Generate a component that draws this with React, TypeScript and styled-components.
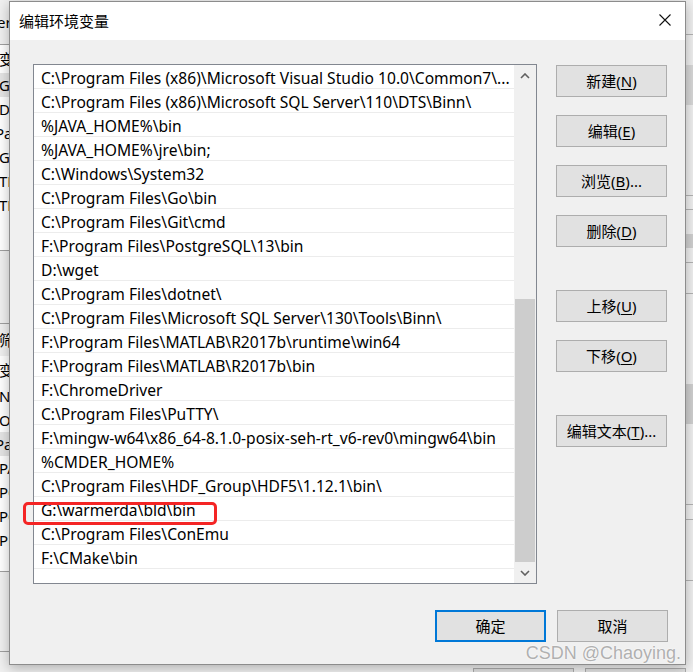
import React from "react";
import styled, { createGlobalStyle } from "styled-components";

const GlobalStyle = createGlobalStyle`
  *, *::before, *::after { box-sizing: border-box; }
  html, body { margin: 0; padding: 0; background: #f0f0f0; }
  body { font-family: "Noto Sans", "Noto Sans CJK SC", sans-serif; color: #000; }
`;

const FONT = `"Noto Sans", "Noto Sans CJK SC", sans-serif`;

const Screen = styled.div`
  position: relative;
  width: 693px;
  height: 672px;
  overflow: hidden;
  display: grid;
  grid-template-columns: 9px 677px 7px;
  grid-template-rows: 1px 664px 7px;
  background: #f0f0f0;
  font-family: ${FONT};
`;

/* ---------- background window fragments ---------- */
const LeftStrip = styled.div`
  grid-column: 1;
  grid-row: 1 / 4;
  display: flex;
  flex-direction: column;
  overflow: hidden;
  background: #f0f0f0;
`;

const StripBlock = styled.div<{ $h: number; $bg?: string; $line?: boolean }>`
  height: ${(p) => p.$h}px;
  flex-shrink: 0;
  background: ${(p) => p.$bg || "transparent"};
  border-bottom: ${(p) => (p.$line ? "1px solid #a0a0a0" : "none")};
  display: flex;
  flex-direction: column;
  overflow: hidden;
`;

const StripText = styled.div<{ $hl?: boolean; $h?: number; $shift?: number }>`
  height: ${(p) => p.$h || 24}px;
  line-height: ${(p) => p.$h || 24}px;
  font-size: 15px;
  white-space: nowrap;
  margin-left: ${(p) => p.$shift ?? -1}px;
  background: ${(p) => (p.$hl ? "#e5e5e5" : "transparent")};
  color: #000;
`;

const RightStrip = styled.div`
  grid-column: 3;
  grid-row: 1 / 4;
  display: flex;
  flex-direction: column;
  background: #f0f0f0;
  overflow: hidden;
`;

const RLine = styled.div<{ $top: number; $c?: string; $h?: number }>`
  flex-shrink: 0;
  margin-top: ${(p) => p.$top}px;
  height: ${(p) => p.$h || 1}px;
  background: ${(p) => p.$c || "#b4b4b4"};
`;

const BottomStrip = styled.div`
  grid-column: 2;
  grid-row: 3;
  display: flex;
  gap: 11px;
  padding-left: 464px;
  padding-top: 3px;
`;

const GhostButton = styled.div`
  width: 111px;
  height: 20px;
  border: 1px solid #adadad;
  background: #e1e1e1;
`;

/* ---------- dialog ---------- */
const Dialog = styled.div`
  grid-column: 2;
  grid-row: 2;
  position: relative;
  z-index: 1;
  display: flex;
  flex-direction: column;
  border: 1px solid #8c8c8c;
  background: #f0f0f0;
  box-shadow: 0 3px 12px rgba(0, 0, 0, 0.28);
`;

const TitleBar = styled.div`
  height: 38px;
  flex-shrink: 0;
  background: #ffffff;
  display: flex;
  align-items: center;
  justify-content: space-between;
  padding-left: 9px;
`;

const Title = styled.div`
  font-size: 15px;
  font-family: "Noto Sans CJK SC", sans-serif;
  color: #000;
  margin-top: -2px;
`;

const CloseButton = styled.div`
  width: 40px;
  height: 38px;
  display: flex;
  align-items: center;
  justify-content: center;
  margin-top: -2px;
`;

const Body = styled.div`
  flex: 1;
  display: flex;
  flex-direction: column;
  padding: 24px 17px 22px 23px;
`;

const Main = styled.div`
  display: flex;
  gap: 19px;
  height: 520px;
`;

const ListBox = styled.div`
  width: 504px;
  height: 520px;
  border: 1px solid #828790;
  background: #ffffff;
  display: flex;
`;

const Rows = styled.div`
  width: 480px;
  display: flex;
  flex-direction: column;
`;

const Row = styled.div`
  position: relative;
  height: 24px;
  flex-shrink: 0;
  border-bottom: 1px solid #ececec;
  padding: 2px 0 0 7px;
  font-size: 15.6px;
  line-height: 23px;
  white-space: nowrap;
  color: #000;
`;

const Highlight = styled.div`
  position: absolute;
  left: -11px;
  top: 5px;
  width: 194px;
  height: 23px;
  border: 3px solid #f42525;
  border-radius: 5px;
  pointer-events: none;
`;

const ScrollBar = styled.div`
  width: 22px;
  background: #f0f0f0;
  display: flex;
  flex-direction: column;
`;

const ArrowBtn = styled.div<{ $h: number }>`
  height: ${(p) => p.$h}px;
  flex-shrink: 0;
  display: flex;
  align-items: center;
  justify-content: center;
`;

const Track = styled.div`
  flex: 1;
`;

const Thumb = styled.div`
  height: 263px;
  flex-shrink: 0;
  margin: 0 1px;
  background: #cdcdcd;
`;

const SideButtons = styled.div`
  display: flex;
  flex-direction: column;
  gap: 18px;
  padding-top: 1px;
`;

const Button = styled.div<{ $extra?: number; $default?: boolean }>`
  width: 111px;
  height: 32px;
  flex-shrink: 0;
  margin-top: ${(p) => p.$extra || 0}px;
  background: #e1e1e1;
  border: ${(p) => (p.$default ? "2px solid #0078d7" : "1px solid #adadad")};
  display: flex;
  align-items: center;
  justify-content: center;
  padding-bottom: 1px;
  font-size: 15px;
  color: #000;
  white-space: nowrap;
  font-family: ${FONT};
  u {
    text-decoration: underline;
    text-underline-offset: 2px;
    text-decoration-thickness: 1px;
  }
`;

const Footer = styled.div`
  margin-top: 26px;
  display: flex;
  justify-content: flex-end;
  gap: 11px;
`;

const Watermark = styled.div`
  position: absolute;
  right: 12px;
  bottom: 8px;
  z-index: 2;
  font-family: "Liberation Sans", Arial, sans-serif;
  font-size: 18px;
  color: #b0b0b0;
  text-shadow: 0 0 1px #fff, 0 0 2px #fff;
  white-space: nowrap;
`;

const Chevron: React.FC<{ up?: boolean }> = ({ up }) => (
  <svg width="10" height="6" viewBox="0 0 10 6">
    <path
      d={up ? "M1 5 L5 1 L9 5" : "M1 1 L5 5 L9 1"}
      fill="none"
      stroke="#606060"
      strokeWidth="1.6"
    />
  </svg>
);

const CloseIcon = () => (
  <svg width="12" height="12" viewBox="0 0 12 12">
    <path d="M0.5 0.5 L11.5 11.5 M11.5 0.5 L0.5 11.5" stroke="#111" strokeWidth="1.1" fill="none" />
  </svg>
);

const paths: string[] = [
  "C:\\Program Files (x86)\\Microsoft Visual Studio 10.0\\Common7\\...",
  "C:\\Program Files (x86)\\Microsoft SQL Server\\110\\DTS\\Binn\\",
  "%JAVA_HOME%\\bin",
  "%JAVA_HOME%\\jre\\bin;",
  "C:\\Windows\\System32",
  "C:\\Program Files\\Go\\bin",
  "C:\\Program Files\\Git\\cmd",
  "F:\\Program Files\\PostgreSQL\\13\\bin",
  "D:\\wget",
  "C:\\Program Files\\dotnet\\",
  "C:\\Program Files\\Microsoft SQL Server\\130\\Tools\\Binn\\",
  "F:\\Program Files\\MATLAB\\R2017b\\runtime\\win64",
  "F:\\Program Files\\MATLAB\\R2017b\\bin",
  "F:\\ChromeDriver",
  "C:\\Program Files\\PuTTY\\",
  "F:\\mingw-w64\\x86_64-8.1.0-posix-seh-rt_v6-rev0\\mingw64\\bin",
  "%CMDER_HOME%",
  "C:\\Program Files\\HDF_Group\\HDF5\\1.12.1\\bin\\",
  "G:\\warmerda\\bld\\bin",
  "C:\\Program Files\\ConEmu",
  "F:\\CMake\\bin",
];

const sideButtons: { label: string; key: string; tail?: string; extra?: number }[] = [
  { label: "新建", key: "N" },
  { label: "编辑", key: "E" },
  { label: "浏览", key: "B", tail: "..." },
  { label: "删除", key: "D" },
  { label: "上移", key: "U", extra: 25 },
  { label: "下移", key: "O" },
  { label: "编辑文本", key: "T", tail: "...", extra: 25 },
];

export default function App() {
  return (
    <>
      <GlobalStyle />
      <Screen>
        <LeftStrip>
          <StripBlock $h={45} $line>
            <StripText $h={44} $shift={-3}>er</StripText>
          </StripBlock>
          <StripBlock $h={206} $bg="#ffffff" $line>
            <StripText $h={28}>变量</StripText>
            <StripText $hl>GO</StripText>
            <StripText>Dr</StripText>
            <StripText $shift={-5}>Pa</StripText>
            <StripText>GO</StripText>
            <StripText>TE</StripText>
            <StripText>TM</StripText>
          </StripBlock>
          <StripBlock $h={73} $line />
          <StripBlock $h={32}>
            <StripText $h={32}>筛</StripText>
          </StripBlock>
          <StripBlock $h={216} $bg="#ffffff" $line>
            <StripText $h={28}>变量</StripText>
            <StripText>NU</StripText>
            <StripText>OS</StripText>
            <StripText $hl $shift={-5}>Pa</StripText>
            <StripText>PA</StripText>
            <StripText>PC</StripText>
            <StripText>PC</StripText>
            <StripText>PR</StripText>
          </StripBlock>
          <StripBlock $h={80} $line />
        </LeftStrip>

        <Dialog>
          <TitleBar>
            <Title>编辑环境变量</Title>
            <CloseButton>
              <CloseIcon />
            </CloseButton>
          </TitleBar>
          <Body>
            <Main>
              <ListBox>
                <Rows>
                  {paths.map((p, i) => (
                    <Row key={i}>
                      {p}
                      {p === "G:\\warmerda\\bld\\bin" && <Highlight />}
                    </Row>
                  ))}
                </Rows>
                <ScrollBar>
                  <ArrowBtn $h={22}>
                    <Chevron up />
                  </ArrowBtn>
                  <Track />
                  <Thumb />
                  <ArrowBtn $h={21}>
                    <Chevron />
                  </ArrowBtn>
                </ScrollBar>
              </ListBox>
              <SideButtons>
                {sideButtons.map((b) => (
                  <Button key={b.key} $extra={b.extra}>
                    {b.label}(<u>{b.key}</u>){b.tail || ""}
                  </Button>
                ))}
              </SideButtons>
            </Main>
            <Footer>
              <Button $default>确定</Button>
              <Button>取消</Button>
            </Footer>
          </Body>
        </Dialog>

        <RightStrip>
          <RLine $top={34} />
          <RLine $top={30} $c="#d8d8d8" $h={40} />
          <RLine $top={90} />
          <RLine $top={13} />
          <RLine $top={24} $c="#d0d0d0" $h={14} />
          <RLine $top={14} />
          <RLine $top={30} />
          <RLine $top={90} $c="#d0d0d0" $h={40} />
          <RLine $top={80} />
          <RLine $top={14} />
          <RLine $top={60} />
        </RightStrip>

        <BottomStrip>
          <GhostButton />
          <GhostButton />
        </BottomStrip>

        <Watermark>CSDN @Chaoying.</Watermark>
      </Screen>
    </>
  );
}
